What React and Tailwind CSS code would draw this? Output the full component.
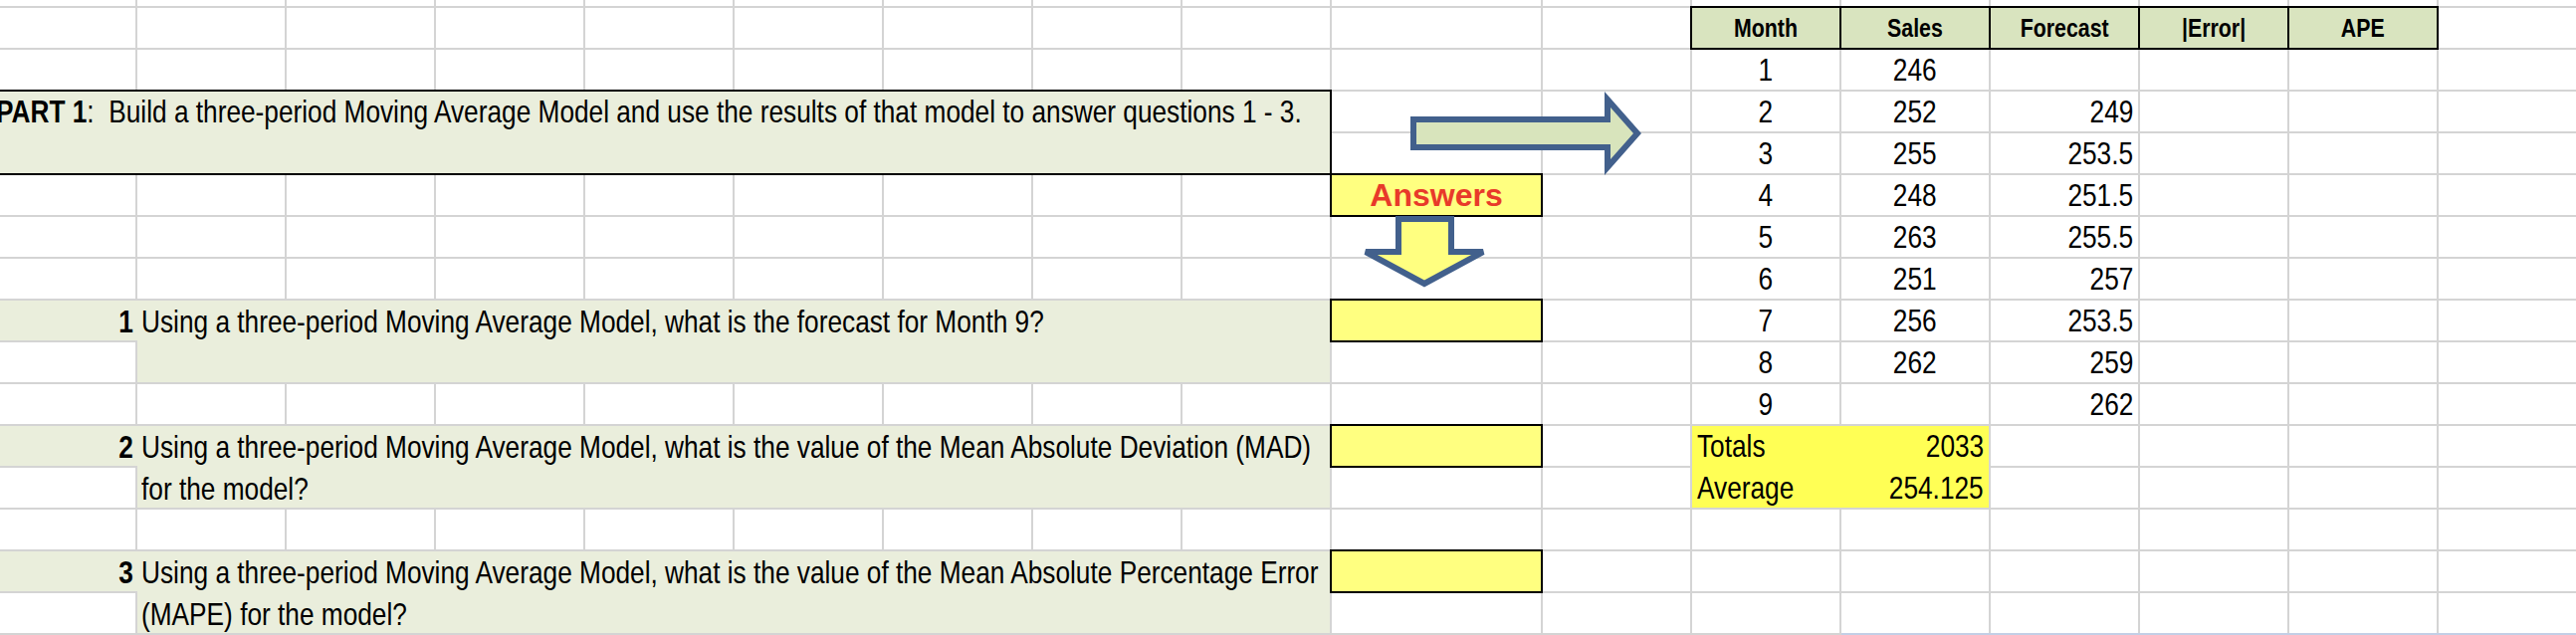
import React from "react";

const sans = "font-['Liberation_Sans',Arial,sans-serif]";
const band = "bg-[#eaeedc]";

// the sheet uses a narrow face; squeeze Liberation Sans to Arial Narrow proportions
const Narrow = ({ children, origin = "origin-left" }) => (
    <span className={`inline-block whitespace-pre scale-x-[0.82] ${origin}`}>{children}</span>
);

const tableRows = [
    { row: "row-start-3", month: 1, sales: "246", forecast: "" },
    { row: "row-start-4", month: 2, sales: "252", forecast: "249" },
    { row: "row-start-5", month: 3, sales: "255", forecast: "253.5" },
    { row: "row-start-6", month: 4, sales: "248", forecast: "251.5" },
    { row: "row-start-7", month: 5, sales: "263", forecast: "255.5" },
    { row: "row-start-8", month: 6, sales: "251", forecast: "257" },
    { row: "row-start-9", month: 7, sales: "256", forecast: "253.5" },
    { row: "row-start-10", month: 8, sales: "262", forecast: "259" },
    { row: "row-start-11", month: 9, sales: "", forecast: "262" },
];

const headers = [
    { col: "col-start-12", label: "Month" },
    { col: "col-start-13", label: "Sales" },
    { col: "col-start-14", label: "Forecast" },
    { col: "col-start-15", label: "|Error|" },
    { col: "col-start-16", label: "APE" },
];

const questions = [
    {
        row: "row-start-9",
        num: "1",
        lines: ["Using a three-period Moving Average Model, what is the forecast for Month 9?"],
    },
    {
        row: "row-start-12",
        num: "2",
        lines: [
            "Using a three-period Moving Average Model, what is the value of the Mean Absolute Deviation (MAD)",
            "for the model?",
        ],
    },
    {
        row: "row-start-15",
        num: "3",
        lines: [
            "Using a three-period Moving Average Model, what is the value of the Mean Absolute Percentage Error",
            "(MAPE) for the model?",
        ],
    },
];

const Arrows = () => (
    <svg
        className="absolute left-0 top-0 z-20 pointer-events-none"
        width="2588"
        height="638"
        viewBox="0 0 2588 638"
    >
        {/* right arrow pointing at the table */}
        <polygon
            points="1420,120 1615,120 1615,100 1645,134 1615,168 1615,148 1420,148"
            fill="#d8e4bc"
            stroke="#42608c"
            strokeWidth="6"
        />
        {/* down arrow under Answers */}
        <polygon
            points="1405,220 1458,220 1458,253 1490,253 1431,285 1372,253 1405,253"
            fill="#ffff80"
            stroke="#42608c"
            strokeWidth="6"
        />
        <rect x="1850" y="636" width="740" height="2" fill="#c3cfe6" />
    </svg>
);

const App = () => {
    const fillers = Array.from({ length: 289 });

    return (
        <div className={`relative w-[2588px] h-[638px] overflow-hidden bg-white text-black ${sans}`}>
            <div className="grid w-[2588px] h-[638px] overflow-hidden bg-[#d4d4d4] gap-[2px] grid-cols-[136px_repeat(8,148px)_210px_148px_repeat(5,148px)_148px] grid-rows-[6px_repeat(15,40px)_0px]">
                {/* PART 1 banner */}
                <div className={`col-start-1 col-span-9 row-start-4 row-span-2 ${band} outline-2 outline-black relative z-10 text-[32px] leading-[40px] whitespace-nowrap`}>
                    <div className="-ml-1">
                        <Narrow>
                            <span className="font-bold">PART 1</span>:  Build a three-period Moving Average Model and use the results of that model to answer questions 1 - 3.
                        </Narrow>
                    </div>
                </div>

                {/* Answers label */}
                <div className="col-start-10 row-start-6 bg-[#ffff80] outline-2 outline-black relative z-10 text-center font-bold text-[32px] leading-[40px] text-[#e83a2a]">
                    Answers
                </div>

                {/* questions */}
                {questions.map(q => (
                    <React.Fragment key={q.num}>
                        <div className={`col-start-1 ${q.row} ${band} -mr-[2px] text-right pr-1 font-bold text-[32px] leading-[42px]`}>
                            <Narrow origin="origin-right">{q.num}</Narrow>
                        </div>
                        <div className={`col-start-2 col-span-8 ${q.row} row-span-2 ${band} pl-1 text-[32px] leading-[42px] whitespace-nowrap`}>
                            {q.lines.map((line, i) => (
                                <div key={i}>
                                    <Narrow>{line}</Narrow>
                                </div>
                            ))}
                        </div>
                        <div className={`col-start-10 ${q.row} bg-[#ffff80] outline-2 outline-black relative z-10`} />
                    </React.Fragment>
                ))}

                {/* table header */}
                {headers.map(h => (
                    <div
                        key={h.label}
                        className={`${h.col} row-start-2 bg-[#d9e4bf] outline-2 outline-black relative z-10 text-center font-bold text-[26px] leading-[40px]`}
                    >
                        <Narrow origin="origin-center">{h.label}</Narrow>
                    </div>
                ))}

                {/* table body */}
                {tableRows.map(r => (
                    <React.Fragment key={r.month}>
                        <div className={`col-start-12 ${r.row} bg-white text-center text-[32px] leading-[40px]`}>
                            <Narrow origin="origin-center">{r.month}</Narrow>
                        </div>
                        <div className={`col-start-13 ${r.row} bg-white text-center text-[32px] leading-[40px]`}>
                            <Narrow origin="origin-center">{r.sales}</Narrow>
                        </div>
                        <div className={`col-start-14 ${r.row} bg-white text-right pr-[5px] text-[32px] leading-[40px]`}>
                            <Narrow origin="origin-right">{r.forecast}</Narrow>
                        </div>
                    </React.Fragment>
                ))}

                {/* totals */}
                <div className="col-start-12 col-span-2 row-start-12 row-span-2 bg-[#ffff55] flex flex-col gap-[2px] px-[5px] text-[32px] leading-[40px]">
                    <div className="flex justify-between h-[40px]">
                        <Narrow>Totals</Narrow>
                        <Narrow origin="origin-right">2033</Narrow>
                    </div>
                    <div className="flex justify-between h-[40px]">
                        <Narrow>Average</Narrow>
                        <Narrow origin="origin-right">254.125</Narrow>
                    </div>
                </div>

                {/* empty sheet cells */}
                {fillers.map((_, i) => (
                    <div key={i} className="bg-white" />
                ))}
            </div>
            <Arrows />
        </div>
    );
};

export default App;
